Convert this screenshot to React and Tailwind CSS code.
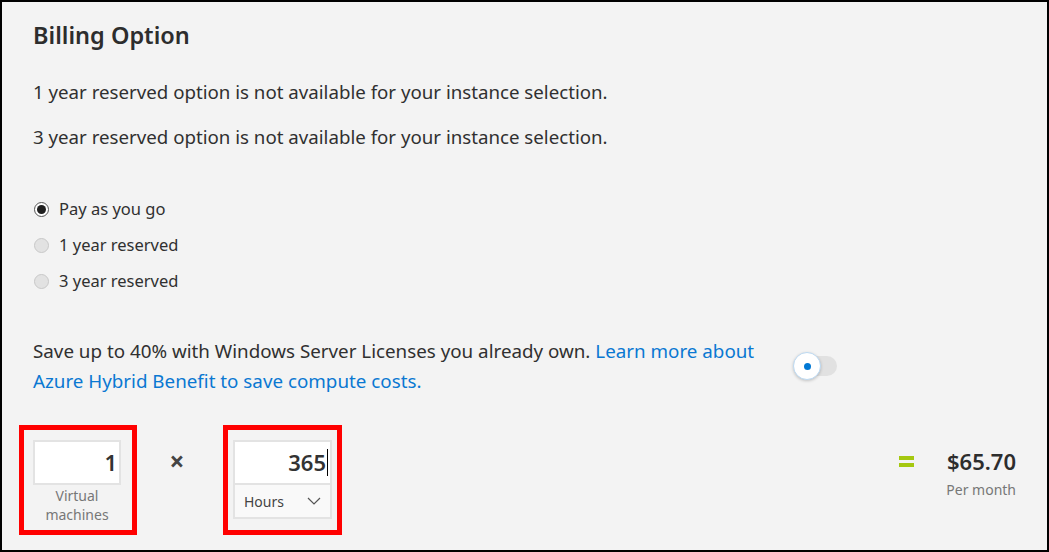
import React from 'react';

const font = { fontFamily: '"Noto Sans", "Open Sans", Arial, sans-serif' };

const Radio = ({ checked, label }) => (
  <label className="flex items-center h-[36px] gap-[10px]">
    {checked ? (
      <span className="w-[15px] h-[15px] rounded-full border border-[#555] bg-white flex items-center justify-center">
        <span className="w-[9px] h-[9px] rounded-full bg-[#1f1f1f]" />
      </span>
    ) : (
      <span className="w-[15px] h-[15px] rounded-full border border-[#c8c8c8] bg-[#e2e2e2]" />
    )}
    <span className="text-[16.5px] text-[#303030]">{label}</span>
  </label>
);

const App = () => {
  return (
    <div
      className="w-[1049px] h-[552px] border-2 border-black bg-[#f3f3f3] px-[31px] pt-[17px] overflow-hidden text-[#303030]"
      style={font}
    >
      <h2 className="text-[23.5px] leading-[32px] font-semibold text-[#2d2d2d]">Billing Option</h2>

      <p className="mt-[27px] text-[18.7px] leading-[28px]">
        1 year reserved option is not available for your instance selection.
      </p>
      <p className="mt-[17px] text-[18.7px] leading-[28px]">
        3 year reserved option is not available for your instance selection.
      </p>

      <div className="mt-[40px] pl-[1px]">
        <Radio checked label="Pay as you go" />
        <Radio label="1 year reserved" />
        <Radio label="3 year reserved" />
      </div>

      <div className="mt-[37px] flex items-center">
        <p className="w-[738px] text-[18.8px] leading-[30px]">
          Save up to 40% with Windows Server Licenses you already own.{' '}
          <a className="text-[#0a78d2]">Learn more about Azure Hybrid Benefit to save compute costs.</a>
        </p>
        <div className="relative ml-[22px] w-[44px] h-[28px]">
          <div className="absolute left-[12px] top-[4px] w-[32px] h-[20px] rounded-full bg-[#e1e1e1]" />
          <div className="absolute left-0 top-0 w-[28px] h-[28px] rounded-full bg-white border border-[#bcd9f2] shadow-[0_1px_3px_rgba(0,0,0,0.2)] flex items-center justify-center">
            <span className="w-[7px] h-[7px] rounded-full bg-[#0078d4]" />
          </div>
        </div>
      </div>

      <div className="mt-[29px] ml-[-14px] flex items-start">
        <div className="w-[118px] h-[110px] border-[5px] border-[#ff0000] pt-[10px] pl-[9px]">
          <div className="w-[88px] h-[45px] bg-white border-2 border-[#e3e3e3] flex items-center justify-end pr-[2px]">
            <span className="text-[22px] font-semibold text-[#333]">1</span>
          </div>
          <div className="w-[88px] mt-[1px] text-center text-[14px] leading-[19px] text-[#777]">
            Virtual
            <br />
            machines
          </div>
        </div>

        <div className="w-[80px] h-[72px] flex items-center justify-center">
          <span className="text-[26px] font-bold text-[#444] leading-none">×</span>
        </div>

        <div className="w-[119px] h-[110px] border-[5px] border-[#ff0000] pt-[10px] pl-[5px] ml-[6px]">
          <div className="w-[99px] h-[79px] bg-white border-2 border-[#e3e3e3] flex flex-col">
            <div className="h-[43px] flex items-center justify-end pr-[2px] border-b-2 border-[#e3e3e3]">
              <span className="text-[22px] font-semibold text-[#333]">365</span>
              <span className="w-px h-[27px] bg-black ml-[1px]" />
            </div>
            <div className="flex-1 flex items-center justify-between pl-[9px] pr-[9px] bg-[#f9f9f9]">
              <span className="text-[14px] text-[#444]">Hours</span>
              <svg width="14" height="8" viewBox="0 0 14 8" fill="none" stroke="#555" strokeWidth="1.2">
                <path d="M1 1l6 6 6-6" />
              </svg>
            </div>
          </div>
        </div>

        <div className="flex-1 flex justify-end items-start">
          <div className="h-[72px] flex items-center mr-[32px]">
            <span className="block w-[15px] h-[11px] border-y-[4px] border-[#a5c810]" />
          </div>
          <div className="flex flex-col items-end pt-[21px]">
            <span className="text-[22px] leading-[30px] font-semibold text-[#2d2d2d]">$65.70</span>
            <span className="text-[14px] leading-[20px] text-[#777] mt-[4px]">Per month</span>
          </div>
        </div>
      </div>
    </div>
  );
};

export default App;
